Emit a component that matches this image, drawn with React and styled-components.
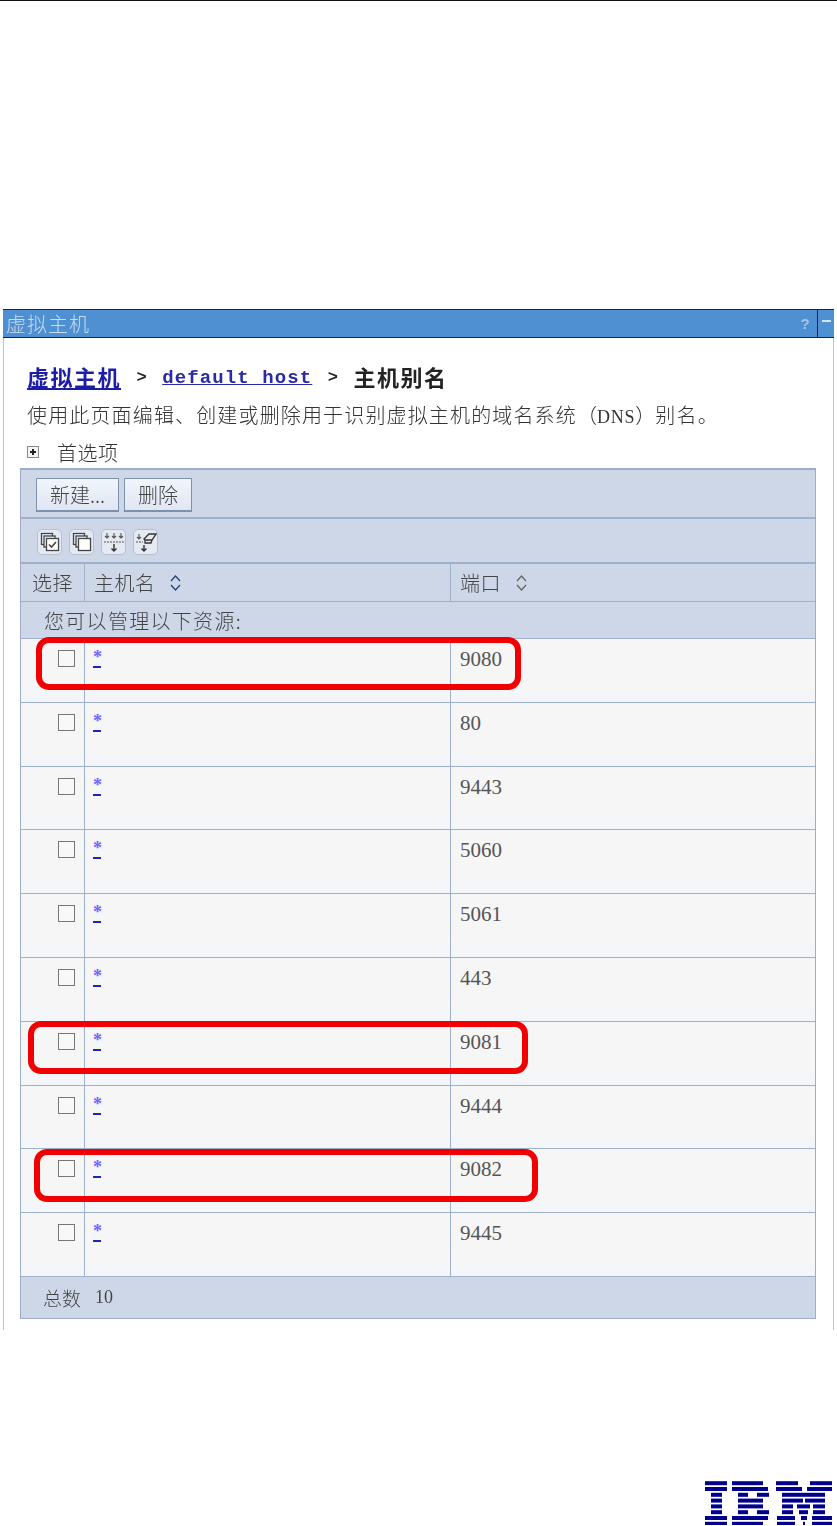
import React from "react";
import styled, { createGlobalStyle } from "styled-components";

const ports = [
  { port: "9080", mark: { left: 15, width: 485, top: -2 } },
  { port: "80" },
  { port: "9443" },
  { port: "5060" },
  { port: "5061" },
  { port: "443" },
  { port: "9081", mark: { left: 7, width: 500, top: -1 } },
  { port: "9444" },
  { port: "9082", mark: { left: 13, width: 504, top: 0 } },
  { port: "9445" },
];

const logoBars = [
  [[0, 22], [27, 58], [71, 93], [105, 127]],
  [[0, 22], [27, 63], [71, 97], [102, 127]],
  [[6, 17], [33, 43], [52, 64], [77, 120]],
  [[6, 17], [33, 58], [77, 98], [100, 120]],
  [[6, 17], [33, 58], [77, 88], [92, 105], [108, 120]],
  [[6, 17], [33, 43], [52, 64], [77, 88], [94, 103], [108, 120]],
  [[0, 22], [27, 63], [72, 90], [96, 102], [107, 127]],
  [[0, 22], [27, 58], [72, 90], [98, 100], [107, 127]],
];

const App = () => (
  <Page>
    <GlobalStyle />
    <Window>
      <TitleBar>
        <Title>虚拟主机</Title>
        <Help>?</Help>
        <Minimize />
      </TitleBar>
      <Content>
        <Breadcrumb>
          <CrumbLink>虚拟主机</CrumbLink>
          <Sep>&gt;</Sep>
          <HostLink>default_host</HostLink>
          <Sep>&gt;</Sep>
          <span>主机别名</span>
        </Breadcrumb>
        <Description>
          使用此页面编辑、创建或删除用于识别虚拟主机的域名系统<Dns>（<DnsText>DNS</DnsText>）</Dns>别名。
        </Description>
        <Preferences>
          <ExpandBox />
          <span>首选项</span>
        </Preferences>
        <Table>
          <ButtonBar>
            <Button>新建...</Button>
            <Button>删除</Button>
          </ButtonBar>
          <IconBar>
            <IconButton><SelectAllIcon /></IconButton>
            <IconButton><DeselectIcon /></IconButton>
            <IconButton><FilterIcon /></IconButton>
            <IconButton><ClearFilterIcon /></IconButton>
          </IconBar>
          <HeaderRow>
            <HeaderCell $center>选择</HeaderCell>
            <HeaderCell>主机名<SortIcon $active /></HeaderCell>
            <HeaderCell>端口<SortIcon /></HeaderCell>
          </HeaderRow>
          <SubHeader>您可以管理以下资源:</SubHeader>
          {ports.map(({ port, mark }) => (
            <Row key={port}>
              <CheckCell><Check /></CheckCell>
              <HostCell><Star>*</Star></HostCell>
              <PortCell>{port}</PortCell>
              {mark && <Highlight $left={mark.left} $width={mark.width} $top={mark.top} />}
            </Row>
          ))}
          <Footer>总数 <Total>10</Total></Footer>
        </Table>
      </Content>
    </Window>
    <Logo viewBox="0 0 127 44" aria-label="IBM">
      {logoBars.map((bars, row) =>
        bars.map(([from, to]) => (
          <rect key={`${row}-${from}`} x={from} y={row * 5.8 + 0.2} width={to - from} height="4" />
        ))
      )}
    </Logo>
  </Page>
);

const SelectAllIcon = () => (
  <svg width="20" height="20" viewBox="0 0 20 20" fill="#eef2f8" stroke="#444" strokeWidth="1.3">
    <rect x="1.5" y="1.5" width="11" height="11" />
    <rect x="4" y="4" width="11" height="11" />
    <rect x="6.5" y="6.5" width="12" height="12" fill="#fff" />
    <path d="M9 12.5l2.5 2.5 4.5-5" fill="none" strokeWidth="1.6" />
  </svg>
);

const DeselectIcon = () => (
  <svg width="20" height="20" viewBox="0 0 20 20" fill="#eef2f8" stroke="#444" strokeWidth="1.3">
    <rect x="1.5" y="1.5" width="11" height="11" />
    <rect x="4" y="4" width="11" height="11" />
    <rect x="6.5" y="6.5" width="12" height="12" fill="#fff" />
  </svg>
);

const FilterIcon = () => (
  <svg width="22" height="22" viewBox="0 0 22 22" fill="none" stroke="#555" strokeWidth="1.1">
    <path d="M4 2v5M2 5l2 2 2-2M11 2v5M9 5l2 2 2-2M18 2v5M16 5l2 2 2-2" />
    <path d="M1 11h20" strokeDasharray="2 1" />
    <path d="M11 13v7M8.500 17.500l2.500 2.500 2.500-2.500" strokeWidth="1.4" stroke="#333" />
  </svg>
);

const ClearFilterIcon = () => (
  <svg width="22" height="22" viewBox="0 0 22 22" fill="none" stroke="#555" strokeWidth="1.1">
    <path d="M4 3v5M2 6l2 2 2-2" />
    <path d="M1 11h7" strokeDasharray="2 1" />
    <path d="M9 8l5-5h7l-4 6h-7zM10 9v3h6l1-3" stroke="#333" strokeWidth="1.3" />
    <path d="M9 14v6M6.500 17.500l2.500 2.500 2.500-2.500" strokeWidth="1.4" stroke="#333" />
  </svg>
);

const SortGlyph = ({ className }) => (
  <svg className={className} width="13" height="18" viewBox="0 0 13 18" fill="none" strokeWidth="1.3">
    <path d="M2 7l4.500-5 4.500 5" />
    <path d="M2 11l4.500 5 4.500-5" />
  </svg>
);

const GlobalStyle = createGlobalStyle`
  html, body {
    margin: 0;
    padding: 0;
    background: #fff;
  }
`;

const Page = styled.div`
  height: 1526px;
  box-sizing: border-box;
  border-top: 1px solid #111;
  padding-top: 308px;
  display: flex;
  flex-direction: column;
  overflow: hidden;
  font-family: "Noto Sans CJK SC", "Liberation Sans", sans-serif;
  color: #444;
`;

const Window = styled.div`
  height: 1021px;
  margin: 0 3px;
  box-sizing: border-box;
  border-left: 1px solid #c4c4c4;
  border-right: 1px solid #c4c4c4;
  filter: blur(0.35px);
`;

const TitleBar = styled.div`
  height: 29px;
  margin: 0 -1px;
  box-sizing: border-box;
  display: flex;
  align-items: center;
  background: #4f90d2;
  border-top: 1px solid #16243c;
  border-bottom: 1px solid #16243c;
`;

const Title = styled.div`
  flex: 1;
  padding-left: 3px;
  font-size: 20px;
  font-weight: 300;
  line-height: 24px;
  letter-spacing: 1px;
  color: #c9dcf0;
`;

const Help = styled.div`
  width: 24px;
  text-align: center;
  font: bold 15px "Liberation Sans", sans-serif;
  color: #a9c6e6;
`;

const Minimize = styled.div`
  width: 16px;
  height: 27px;
  border-left: 1px solid #16243c;
  position: relative;

  &::after {
    content: "";
    display: block;
    width: 9px;
    height: 2px;
    margin: 10px auto 0;
    background: #d5e3f3;
  }
`;

const Content = styled.div`
  padding: 24px 17px 0 16px;
`;

const Breadcrumb = styled.div`
  height: 28px;
  padding-left: 7px;
  display: flex;
  align-items: center;
  font-size: 22px;
  font-weight: 700;
  letter-spacing: 1.5px;
  color: #222;
`;

const CrumbLink = styled.span`
  color: #1c1ca8;
  text-decoration: underline;
`;

const HostLink = styled.span`
  margin-top: 3px;
  font: 700 19px "Liberation Mono", monospace;
  letter-spacing: 1.1px;
  color: #2a2aa8;
  text-decoration: underline;
`;

const Sep = styled.span`
  margin: 3px 15.5px 0;
  font: 700 17px "Liberation Mono", monospace;
  letter-spacing: 0;
  color: #222;
`;

const Description = styled.div`
  margin-top: 11px;
  height: 28px;
  padding-left: 7px;
  font-size: 20px;
  line-height: 28px;
  letter-spacing: 1.15px;
  white-space: nowrap;
  font-weight: 300;
  color: #333;
`;

const Dns = styled.span`
  letter-spacing: 0;
`;

const DnsText = styled.span`
  font: 18px "Liberation Serif", serif;
  letter-spacing: 0.8px;
`;

const Preferences = styled.div`
  margin-top: 9px;
  height: 28px;
  padding-left: 7px;
  display: flex;
  align-items: center;
  gap: 18px;
  font-size: 20px;
  letter-spacing: 0.5px;
  font-weight: 300;
  color: #333;
`;

const ExpandBox = styled.span`
  width: 10px;
  height: 10px;
  border: 1px solid #888;
  background:
    linear-gradient(#222, #222) center / 6px 2px no-repeat,
    linear-gradient(#222, #222) center / 2px 6px no-repeat,
    #f4f4f4;
`;

const Table = styled.div`
  margin-top: 2px;
  border: 1px solid #9eadc7;
  border-top-width: 2px;
  font-weight: 300;
`;

const ButtonBar = styled.div`
  height: 49px;
  box-sizing: border-box;
  padding: 8px 0 0 15px;
  display: flex;
  align-items: flex-start;
  gap: 5px;
  background: #ced7e8;
  border-bottom: 2px solid #9fb0cb;
`;

const Button = styled.div`
  height: 34px;
  box-sizing: border-box;
  padding: 0 13px;
  display: flex;
  align-items: center;
  font-size: 20px;
  color: #444;
  background: linear-gradient(#f1f5fc, #dfe7f3);
  border: 1px solid #7d91ad;
  border-bottom-width: 2px;
`;

const IconBar = styled.div`
  height: 45px;
  box-sizing: border-box;
  padding: 10px 0 0 16px;
  display: flex;
  align-items: flex-start;
  gap: 7px;
  background: #ced7e8;
  border-bottom: 2px solid #9fb0cb;
`;

const IconButton = styled.div`
  width: 25px;
  height: 26px;
  box-sizing: border-box;
  display: flex;
  align-items: center;
  justify-content: center;
  background: #e4e9f2;
  border: 1px solid #b4bfd0;
  border-radius: 5px;
`;

const HeaderRow = styled.div`
  height: 38px;
  box-sizing: border-box;
  display: grid;
  grid-template-columns: 63px 366px 1fr;
  background: #ced7e8;
  border-bottom: 1px solid #9fb0cb;
`;

const HeaderCell = styled.div`
  display: flex;
  align-items: center;
  justify-content: ${(p) => (p.$center ? "center" : "flex-start")};
  padding-left: ${(p) => (p.$center ? "0" : "9px")};
  font-size: 20px;
  letter-spacing: 0.4px;
  color: #444;

  & + & {
    border-left: 1px solid #9fb0cb;
  }
`;

const SortIcon = styled(({ $active, ...rest }) => <SortGlyph {...rest} />)`
  margin-left: 14px;
  stroke: ${(p) => (p.$active ? "#2b3f7c" : "#666")};
`;

const SubHeader = styled.div`
  height: 37px;
  box-sizing: border-box;
  padding-left: 23px;
  display: flex;
  align-items: center;
  font-size: 20px;
  letter-spacing: 1.3px;
  color: #444;
  background: #ced7e8;
  border-bottom: 1px solid #9fb0cb;
`;

const Row = styled.div`
  position: relative;
  height: 63.8px;
  box-sizing: border-box;
  display: grid;
  grid-template-columns: 63px 366px 1fr;
  background: linear-gradient(#f6f6f6 75%, #f2f5fa);
  border-bottom: 1px solid #9fb0cb;
`;

const CheckCell = styled.div`
  padding: 11px 0 0 37px;
`;

const Check = styled.div`
  width: 17px;
  height: 17px;
  box-sizing: border-box;
  background: #f8f8f6;
  border: 1.5px solid #777;
`;

const HostCell = styled.div`
  padding: 8px 0 0 8px;
  border-left: 1px solid #9fb0cb;
`;

const Star = styled.a`
  display: block;
  width: 8px;
  height: 19px;
  border-bottom: 2px solid #2222b8;
  font: bold 18px/21px "Liberation Serif", serif;
  text-align: center;
  color: #6f64ff;
`;

const PortCell = styled.div`
  padding: 5px 0 0 9px;
  border-left: 1px solid #9fb0cb;
  font: 21px/30px "Liberation Serif", serif;
  color: #555;
`;

const Highlight = styled.div`
  position: absolute;
  left: ${(p) => p.$left}px;
  top: ${(p) => p.$top}px;
  width: ${(p) => p.$width}px;
  height: 53px;
  box-sizing: border-box;
  border: 6px solid #f00000;
  border-radius: 13px;
`;

const Footer = styled.div`
  height: 41px;
  padding-left: 22px;
  display: flex;
  align-items: center;
  gap: 14px;
  font-size: 19px;
  color: #444;
  background: #ced7e8;
`;

const Total = styled.span`
  font: 18px "Liberation Serif", serif;
`;

const Logo = styled.svg`
  width: 127px;
  height: 44px;
  flex: none;
  margin: auto 5px 1px 0;
  align-self: flex-end;
  fill: #00008c;
`;

export default App;
